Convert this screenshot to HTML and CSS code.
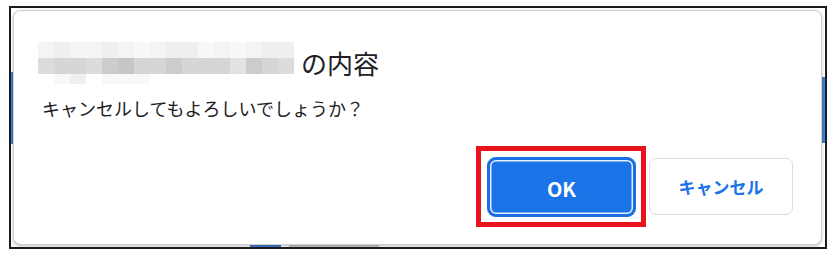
FILE: index.html
```html
<!DOCTYPE html>
<html lang="ja">
<head>
  <meta charset="UTF-8" />
  <meta name="viewport" content="width=device-width, initial-scale=1.0"/>
  <title>確認ダイアログ</title>
  <link rel="stylesheet" href="styles.css">
</head>
<body>

  <div class="frame">
    <div class="dialog">

      <!-- Title: site name is pixelated out -->
      <div class="title">
        <div class="mosaic">
          <span class="c2"></span><span class="c3"></span><span class="c2"></span><span class="c2"></span>
          <span class="c3"></span><span class="c2"></span><span class="c1"></span><span class="c2"></span>
          <span class="c3"></span><span class="c3"></span><span class="c1"></span><span class="c2"></span>
          <span class="c1"></span><span class="c2"></span><span class="c3"></span><span class="c3"></span>

          <span class="c5"></span><span class="c6"></span><span class="c6"></span><span class="c5"></span>
          <span class="c7"></span><span class="c8"></span><span class="c6"></span><span class="c6"></span>
          <span class="c7"></span><span class="c6"></span><span class="c6"></span><span class="c6"></span>
          <span class="c4"></span><span class="c7"></span><span class="c6"></span><span class="c5"></span>

          <span></span><span class="c1"></span><span class="c3"></span><span></span>
          <span class="c1"></span><span class="c1"></span><span class="c1"></span><span></span>
          <span></span><span></span><span></span><span></span>
          <span></span><span></span><span></span><span></span>
        </div>
        <span class="title-text">の内容</span>
      </div>

      <p class="message">キャンセルしてもよろしいでしょうか？</p>

      <div class="actions">
        <span class="highlight">
          <button class="btn btn-ok">OK</button>
        </span>
        <button class="btn btn-cancel">キャンセル</button>
      </div>

    </div>
  </div>

</body>
</html>
```

FILE: styles.css
```css
* { box-sizing: border-box; margin: 0; padding: 0; }
body { background: #fff; font-family: "Noto Sans CJK JP", "Noto Sans", sans-serif; color: #202124; }

/* screenshot frame with bits of the page peeking out */
.frame {
  margin: 6px 0 0 9px;
  width: 818px;
  height: 243px;
  border: 2px solid #1c1c1c;
  padding: 2px 3px 2px 2px;
  background:
    linear-gradient(#3f7ed3, #3f7ed3) left 0 top 64px / 3px 72px no-repeat,
    linear-gradient(#3f7ed3, #3f7ed3) right 0 top 69px / 3px 66px no-repeat,
    linear-gradient(#3f7ed3, #3f7ed3) 239px 100% / 31px 2px no-repeat,
    linear-gradient(#c9c9c9, #c9c9c9) 278px 100% / 90px 2px no-repeat,
    #fff;
}

.dialog {
  height: 100%;
  background: #fff;
  border: 1px solid #d2d2d2;
  border-radius: 8px;
  box-shadow: 0 1px 3px rgba(0, 0, 0, .28);
  padding: 31px 28px 0 24px;
}

.title { display: flex; align-items: center; height: 42px; }
.title-text { font-size: 26px; line-height: 1; margin-left: 7px; margin-top: -1px; }

.mosaic {
  display: grid;
  grid-template-columns: repeat(16, 16px);
  grid-template-rows: 16px 16px 10px;
}
.c1 { background: #f8f8f8; }
.c2 { background: #f4f4f4; }
.c3 { background: #efefef; }
.c4 { background: #e2e2e2; }
.c5 { background: #dcdcdc; }
.c6 { background: #d5d6d6; }
.c7 { background: #cbcdcd; }
.c8 { background: #c5c7c7; }

.message { font-size: 18px; line-height: 26px; margin-top: 11px; padding-left: 4px; }

.actions { display: flex; justify-content: flex-end; align-items: center; margin-top: 25px; }

/* red annotation box round the OK button */
.highlight { display: block; border: 5px solid #e8141d; padding: 6px 5px 5px 6px; }

.btn { font-family: "Noto Sans CJK JP", "Noto Sans", sans-serif; font-weight: bold; cursor: pointer; }
.btn-ok {
  display: block;
  width: 149px;
  height: 60px;
  border: none;
  border-radius: 9px;
  background: #1b73e8;
  color: #fff;
  font-size: 20px;
  padding-top: 3px;
  box-shadow: inset 0 0 0 3px #1a6fe0, inset 0 0 0 4.5px #e6effd;
}
.btn-cancel {
  width: 144px;
  height: 57px;
  margin-left: 3px;
  background: #fff;
  border: 1px solid #dadce0;
  border-radius: 7px;
  color: #1a73e8;
  font-size: 17px;
}
```
